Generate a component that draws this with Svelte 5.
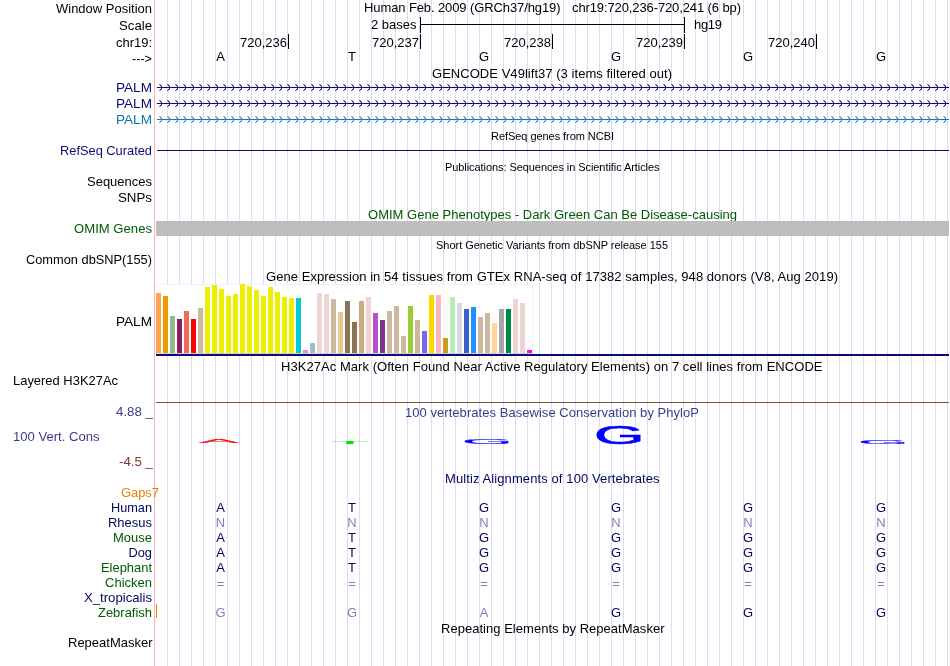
<script>
  const NAVY = '#0c0c78', BLUE = '#1474b4', GREEN = '#005a00', SPECIES = '#00085e';
  const PURPLE = '#3c3c8c', MAROON = '#823232', ORANGE = '#e68200', FADED = '#8080b4';

  const columns = [220.5, 352, 484, 616, 748, 881];

  const tissues = [
    [60, '#ffa54f'], [57, '#ee9a00'], [37, '#8fbc8f'], [34, '#8b1c62'], [42, '#ee6a50'], [34, '#ff0000'],
    [45, '#cdb79e'], [66, '#eeee00'], [68, '#eeee00'], [64, '#eeee00'], [57, '#eeee00'], [59, '#eeee00'],
    [69, '#eeee00'], [67, '#eeee00'], [63, '#eeee00'], [57, '#eeee00'], [66, '#eeee00'], [61, '#eeee00'],
    [56, '#eeee00'], [55, '#eeee00'], [55, '#00cdcd'], [3, '#ee82ee'], [10, '#9ac0cd'], [60, '#eed5d2'],
    [59, '#eed5d2'], [54, '#cdb79e'], [41, '#eec591'], [52, '#8b7355'], [31, '#8b7355'], [52, '#cdaa7d'],
    [56, '#eed5d2'], [40, '#b452cd'], [33, '#7a378b'], [42, '#cdb79e'], [47, '#cdb79e'], [17, '#cdb79e'],
    [47, '#9acd32'], [33, '#cdb79e'], [22, '#7a67ee'], [58, '#ffd700'], [58, '#ffb6c1'], [15, '#cd9b1d'],
    [56, '#b4eeb4'], [50, '#d9d9d9'], [44, '#3a5fcd'], [46, '#1e90ff'], [36, '#cdb79e'], [40, '#cdb79e'],
    [30, '#ffd39b'], [44, '#a6a6a6'], [44, '#008b45'], [54, '#eed5d2'], [50, '#eed5d2'], [3, '#ff00ff']
  ];

  // t(x, baseline, width, text, colour, size)
  const t = (x, y, w, s, c = '#000', size = 13) => ({ x, y, w, s, c, size });
  const r = (x, y, w, h, c) => ({ x, y, w, h, c });
  const bases = (y, s, faded = '') =>
    [...s].map((b, i) => ({ x: columns[i], y, s: b, c: b === 'N' || b === '=' || faded[i] === '1' ? FADED : SPECIES }));

  const rows = [
    { h: 16, label: [t(56, 13, 96, 'Window Position')],
      text: [t(364, 12, 196.5, 'Human Feb. 2009 (GRCh37/hg19)'), t(572, 12, 169, 'chr19:720,236-720,241 (6 bp)')] },
    { h: 17, label: [t(119, 30, 33, 'Scale')], text: [t(371, 29, 45.5, '2 bases'), t(694, 29, 28, 'hg19')],
      rects: [r(420, 24, 265, 1, '#000'), r(420, 17, 1, 16, '#000'), r(684, 17, 1, 16, '#000')] },
    { h: 16, label: [t(116, 47, 36, 'chr19:')],
      text: [236, 237, 238, 239, 240].map((n, i) => t(240 + i * 132, 47, 47, '720,' + n)),
      rects: [0, 1, 2, 3, 4].map((i) => r(288 + i * 132, 34, 1, 15, '#000')) },
    { h: 16, label: [t(132, 63, 20, '--->')], bases: bases(61, 'ATGGGG').map((b) => ({ ...b, c: '#000' })) },
    { h: 15, text: [t(432, 78, 240, 'GENCODE V49lift37 (3 items filtered out)')] },
    { h: 16, label: [t(116, 92, 36, 'PALM', NAVY)], arrows: { y: 87, c: NAVY } },
    { h: 16, label: [t(116, 108, 36, 'PALM', NAVY)], arrows: { y: 103, c: NAVY } },
    { h: 16, label: [t(116, 124, 36, 'PALM', BLUE)], arrows: { y: 119, c: BLUE } },
    { h: 15, text: [t(491, 140, 123, 'RefSeq genes from NCBI', '#000', 11)] },
    { h: 16, label: [t(60, 155, 92, 'RefSeq Curated', NAVY)], rects: [r(157, 150, 792, 1, NAVY)] },
    { h: 15, text: [t(445, 171, 214.5, 'Publications: Sequences in Scientific Articles', '#000', 11)] },
    { h: 16, label: [t(87, 186, 65, 'Sequences')] },
    { h: 16, label: [t(118, 202, 34, 'SNPs')] },
    { h: 15, text: [t(368, 219, 369, 'OMIM Gene Phenotypes - Dark Green Can Be Disease-causing', GREEN)] },
    { h: 16, label: [t(74, 233, 78, 'OMIM Genes', GREEN)], rects: [r(156, 221, 793, 15, '#bebebe')] },
    { h: 15, text: [t(436, 249, 232, 'Short Genetic Variants from dbSNP release 155', '#000', 11)] },
    { h: 16, label: [t(26, 264, 126, 'Common dbSNP(155)')] },
    { h: 16, text: [t(266, 281, 572, 'Gene Expression in 54 tissues from GTEx RNA-seq of 17382 samples, 948 donors (V8, Aug 2019)')] },
    { h: 74, label: [t(116, 326, 36, 'PALM')], expression: true },
    { h: 16, text: [t(281, 371, 541.5, 'H3K27Ac Mark (Often Found Near Active Regulatory Elements) on 7 cell lines from ENCODE')] },
    { h: 31, label: [t(13, 385, 105, 'Layered H3K27Ac')], rects: [r(156, 402, 793, 1, '#824e3e')] },
    { h: 18, label: [t(116, 416, 37, '4.88 _', PURPLE)],
      text: [t(405, 417, 294, '100 vertebrates Basewise Conservation by PhyloP', PURPLE)] },
    { h: 49, label: [t(13, 441, 86.5, '100 Vert. Cons', PURPLE), t(119, 466, 34, '-4.5 _', MAROON)], logo: true },
    { h: 16, text: [t(445, 483, 214.5, 'Multiz Alignments of 100 Vertebrates', SPECIES)] },
    { h: 14, label: [t(121, 497, 38, 'Gaps7', ORANGE)] },
    { h: 15, label: [t(111, 512, 41, 'Human', SPECIES)], bases: bases(512, 'ATGGGG') },
    { h: 15, label: [t(108, 527, 44, 'Rhesus', SPECIES)], bases: bases(527, 'NNNNNN') },
    { h: 15, label: [t(113, 542, 39, 'Mouse', GREEN)], bases: bases(542, 'ATGGGG') },
    { h: 15, label: [t(128.5, 557, 23.5, 'Dog', SPECIES)], bases: bases(557, 'ATGGGG') },
    { h: 15, label: [t(101, 572, 51, 'Elephant', GREEN)], bases: bases(572, 'ATGGGG') },
    { h: 15, label: [t(105, 587, 47, 'Chicken', GREEN)], bases: bases(588, '======') },
    { h: 15, label: [t(84, 602, 68, 'X_tropicalis', SPECIES)] },
    { h: 15, label: [t(98, 617, 54, 'Zebrafish', GREEN)], bases: bases(617, 'GGAGGG', '111000'),
      rects: [r(156, 604, 1, 14, ORANGE)] },
    { h: 15, text: [t(441, 633, 223.5, 'Repeating Elements by RepeatMasker')] },
    { h: 31, label: [t(68, 647, 84.5, 'RepeatMasker')] }
  ];

  let y = 0;
  const tracks = rows.map((row) => {
    const top = y;
    y += row.h;
    return { ...row, top };
  });

  // Conservation letters, stretched to the height of their score
  const logo = [
    { s: 'A', x: 199, y: 443.3, sx: 0.6, sy: 0.062, c: '#ff0000' },
    { s: 'T', x: 331, y: 443.9, sx: 0.62, sy: 0.034, c: '#00e600' },
    { s: 'G', x: 461.9, y: 443.9, sx: 0.65, sy: 0.069, c: '#0000ff' },
    { s: 'G', x: 593.9, y: 443.7, sx: 0.65, sy: 0.264, c: '#0000ff' },
    { s: 'G', x: 857.9, y: 443.9, sx: 0.65, sy: 0.054, c: '#0000ff' }
  ];

  const chevrons = Array.from({ length: 99 }, (_, i) => 159 + i * 8);
</script>

{#snippet line(d, adjust)}
  <text x={d.x} y={d.y} textLength={d.w} lengthAdjust={adjust} font-size={d.size} fill={d.c}>{d.s}</text>
{/snippet}

<main class="browser">
  {#each tracks as row}
    <div class="row">
      <svg class="label" width="155" height={row.h} viewBox="0 {row.top} 155 {row.h}">
        {#each row.label ?? [] as d}{@render line(d, 'spacingAndGlyphs')}{/each}
      </svg>
      <svg class="track" width="795" height={row.h} viewBox="155 {row.top} 795 {row.h}">
        {#each row.rects ?? [] as d}
          <rect class="crisp" x={d.x} y={d.y} width={d.w} height={d.h} fill={d.c} />
        {/each}
        {#each row.text ?? [] as d}{@render line(d, 'spacing')}{/each}
        {#each row.bases ?? [] as b}
          <text class="base" x={b.x} y={b.y} fill={b.c}>{b.s}</text>
        {/each}
        {#if row.arrows}
          {@const a = row.arrows}
          <rect class="crisp" x="157" y={a.y} width="792" height="1" fill={a.c} />
          {#each chevrons as x}
            <g class="crisp" fill={a.c}>
              <path opacity="0.6" d="M{x} {a.y - 3}h1v1h-1zM{x} {a.y + 3}h1v1h-1z" />
              <path d="M{x + 1} {a.y - 2}h1v1h-1zM{x + 1} {a.y + 2}h1v1h-1z" />
              <path d="M{x + 2} {a.y - 1}h1v3h-1z" />
              <path opacity="0.35" d="M{x + 1} {a.y - 3}h1v1h-1zM{x + 1} {a.y + 3}h1v1h-1zM{x + 2} {a.y - 2}h1v1h-1zM{x + 2} {a.y + 2}h1v1h-1z" />
            </g>
          {/each}
        {/if}
        {#if row.expression}
          <rect x="156.5" y="284.5" width="376" height="69" fill="#fff" stroke="#f2f2f2" />
          <rect class="crisp" x="156" y="353" width="377" height="1" fill="#d3d3d3" />
          {#each tissues as [h, c], i}
            <rect class="crisp" x={156 + i * 7} y={353 - h} width="5" height={h} fill={c} />
          {/each}
          <rect class="crisp" x="156" y="354" width="793" height="2" fill={NAVY} />
        {/if}
        {#if row.logo}
          {#each logo as l}
            <text class="logo" transform="translate({l.x} {l.y}) scale({l.sx} {l.sy})" fill={l.c} stroke={l.c}>{l.s}</text>
          {/each}
        {/if}
      </svg>
    </div>
  {/each}
</main>

<style>
  .browser {
    display: flex;
    flex-direction: column;
    width: 950px;
    height: 666px;
    overflow: hidden;
    background:
      linear-gradient(#ffb4b4, #ffb4b4) 154px 0 / 1px 100% no-repeat,
      repeating-linear-gradient(to right, #dcdcf8 0 1px, transparent 1px 12px) 167px 0 / 783px 100% no-repeat,
      #fff;
    font-family: "Liberation Sans", Arial, sans-serif;
  }
  .row { display: flex; flex: none; will-change: transform; }
  svg { display: block; flex: none; overflow: visible; }
  .base { font-size: 13px; text-anchor: middle; }
  .logo { font-size: 100px; stroke-width: 2.5px; }
  .crisp { shape-rendering: crispEdges; }
</style>
